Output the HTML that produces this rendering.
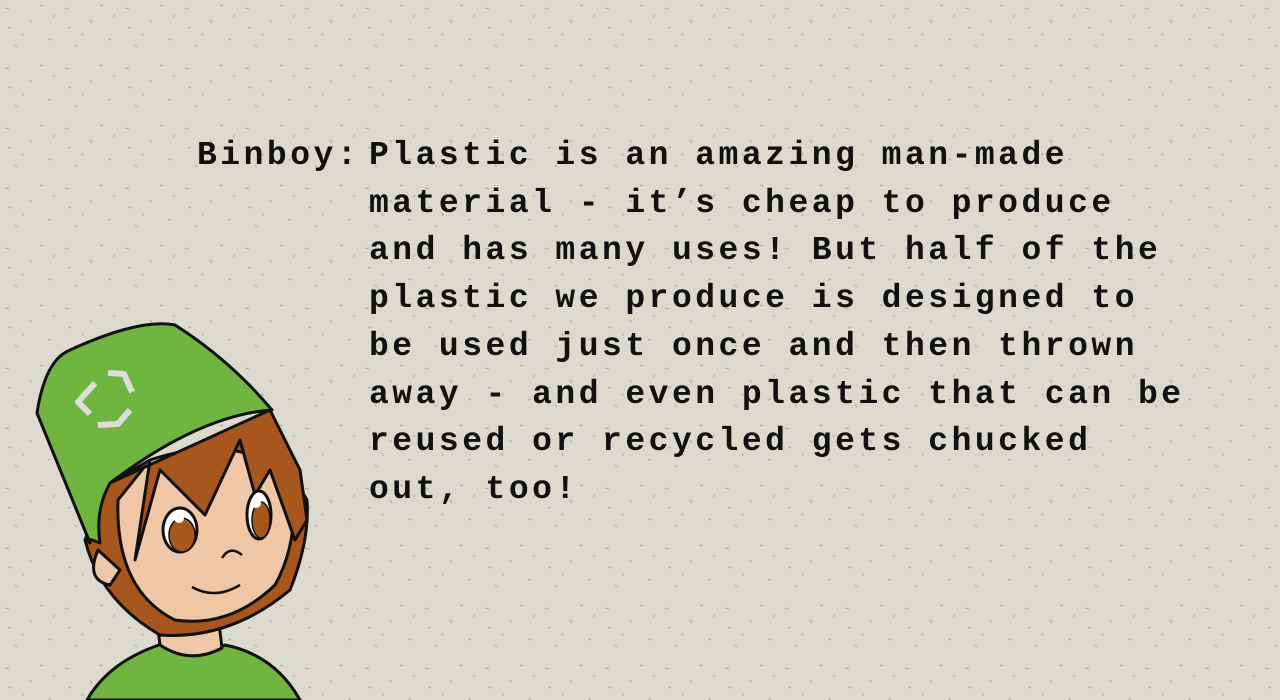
<!DOCTYPE html>
<html><head><meta charset="utf-8"><style>
html,body{margin:0;padding:0}
body{width:1280px;height:700px;overflow:hidden;background:#dcd9ce;position:relative;font-family:"Liberation Mono",monospace;}
.t{position:absolute;font-size:33px;font-weight:bold;letter-spacing:3.5px;line-height:47.7px;color:#111;white-space:pre;}
</style></head><body>
<svg width="1280" height="700" style="position:absolute;left:0;top:0">
<defs><pattern id="sp" width="60" height="60" patternUnits="userSpaceOnUse">
<path d="M5 8l4 1M30 20l2 3M48 40l3-1M15 45l2 2M40 5l3 1M22 33l1 3M55 15l-2 2M8 28l3-1" stroke="#b3b0a6" stroke-width="1.2"/></pattern></defs>
<rect width="1280" height="700" fill="url(#sp)"/>
<g stroke="#111" stroke-width="3" stroke-linejoin="round">
<path d="M87 700 Q110 660 165 643 Q195 660 225 645 Q275 655 300 700 Z" fill="#6fb53f"/>
<path d="M157 620 L160 645 Q190 665 222 648 L218 615 Z" fill="#efc7a6"/>
<path d="M85 540 Q100 600 160 635 Q230 640 290 590 Q310 540 307 500 L260 420 L110 480 Z" fill="#a7561d"/>
<path d="M118 500 Q115 590 175 620 Q230 628 275 585 Q300 540 292 480 Q240 430 150 460 Z" fill="#efc7a6"/>
<path d="M98 550 Q85 580 110 585 L120 570 Z" fill="#efc7a6"/>
<path d="M110 483 L150 460 L135 560 L160 470 L205 515 L240 440 L255 495 L270 470 L295 540 L307 520 L300 470 L270 410 Z" fill="#a7561d"/>
<path d="M37 413 Q45 360 70 350 Q140 318 175 325 Q230 360 272 410 Q200 415 110 483 Q95 510 100 543 Q80 535 90 543 Z" fill="#6fb53f"/>
<ellipse cx="180" cy="530" rx="17" ry="22" fill="#fff"/>
<ellipse cx="182" cy="535" rx="13" ry="17" fill="#a7561d" stroke-width="1.5"/>
<ellipse cx="259" cy="515" rx="12" ry="24" fill="#fff"/>
<ellipse cx="261" cy="520" rx="9" ry="18" fill="#a7561d" stroke-width="1.5"/>
<circle cx="179" cy="518" r="5" fill="#fff" stroke="none"/>
<circle cx="256" cy="503" r="5" fill="#fff" stroke="none"/>
<path d="M222 558 Q230 545 242 555" fill="none" stroke-width="2.5"/>
<path d="M192 587 Q215 600 240 585" fill="none" stroke-width="2.5"/>
</g>
<g fill="none" stroke="#ddd" stroke-width="6" stroke-linejoin="round">
<path d="M95 383 L78 402 L90 414"/><path d="M108 373 L124 374 L132 392"/><path d="M98 425 L118 424 L130 410"/>
</g>
</svg>
<div class="t" style="left:197px;top:132px">Binboy:</div>
<div class="t" style="left:369px;top:132px">Plastic is an amazing man-made
material - it’s cheap to produce
and has many uses! But half of the
plastic we produce is designed to
be used just once and then thrown
away - and even plastic that can be
reused or recycled gets chucked
out, too!</div>
</body></html>
